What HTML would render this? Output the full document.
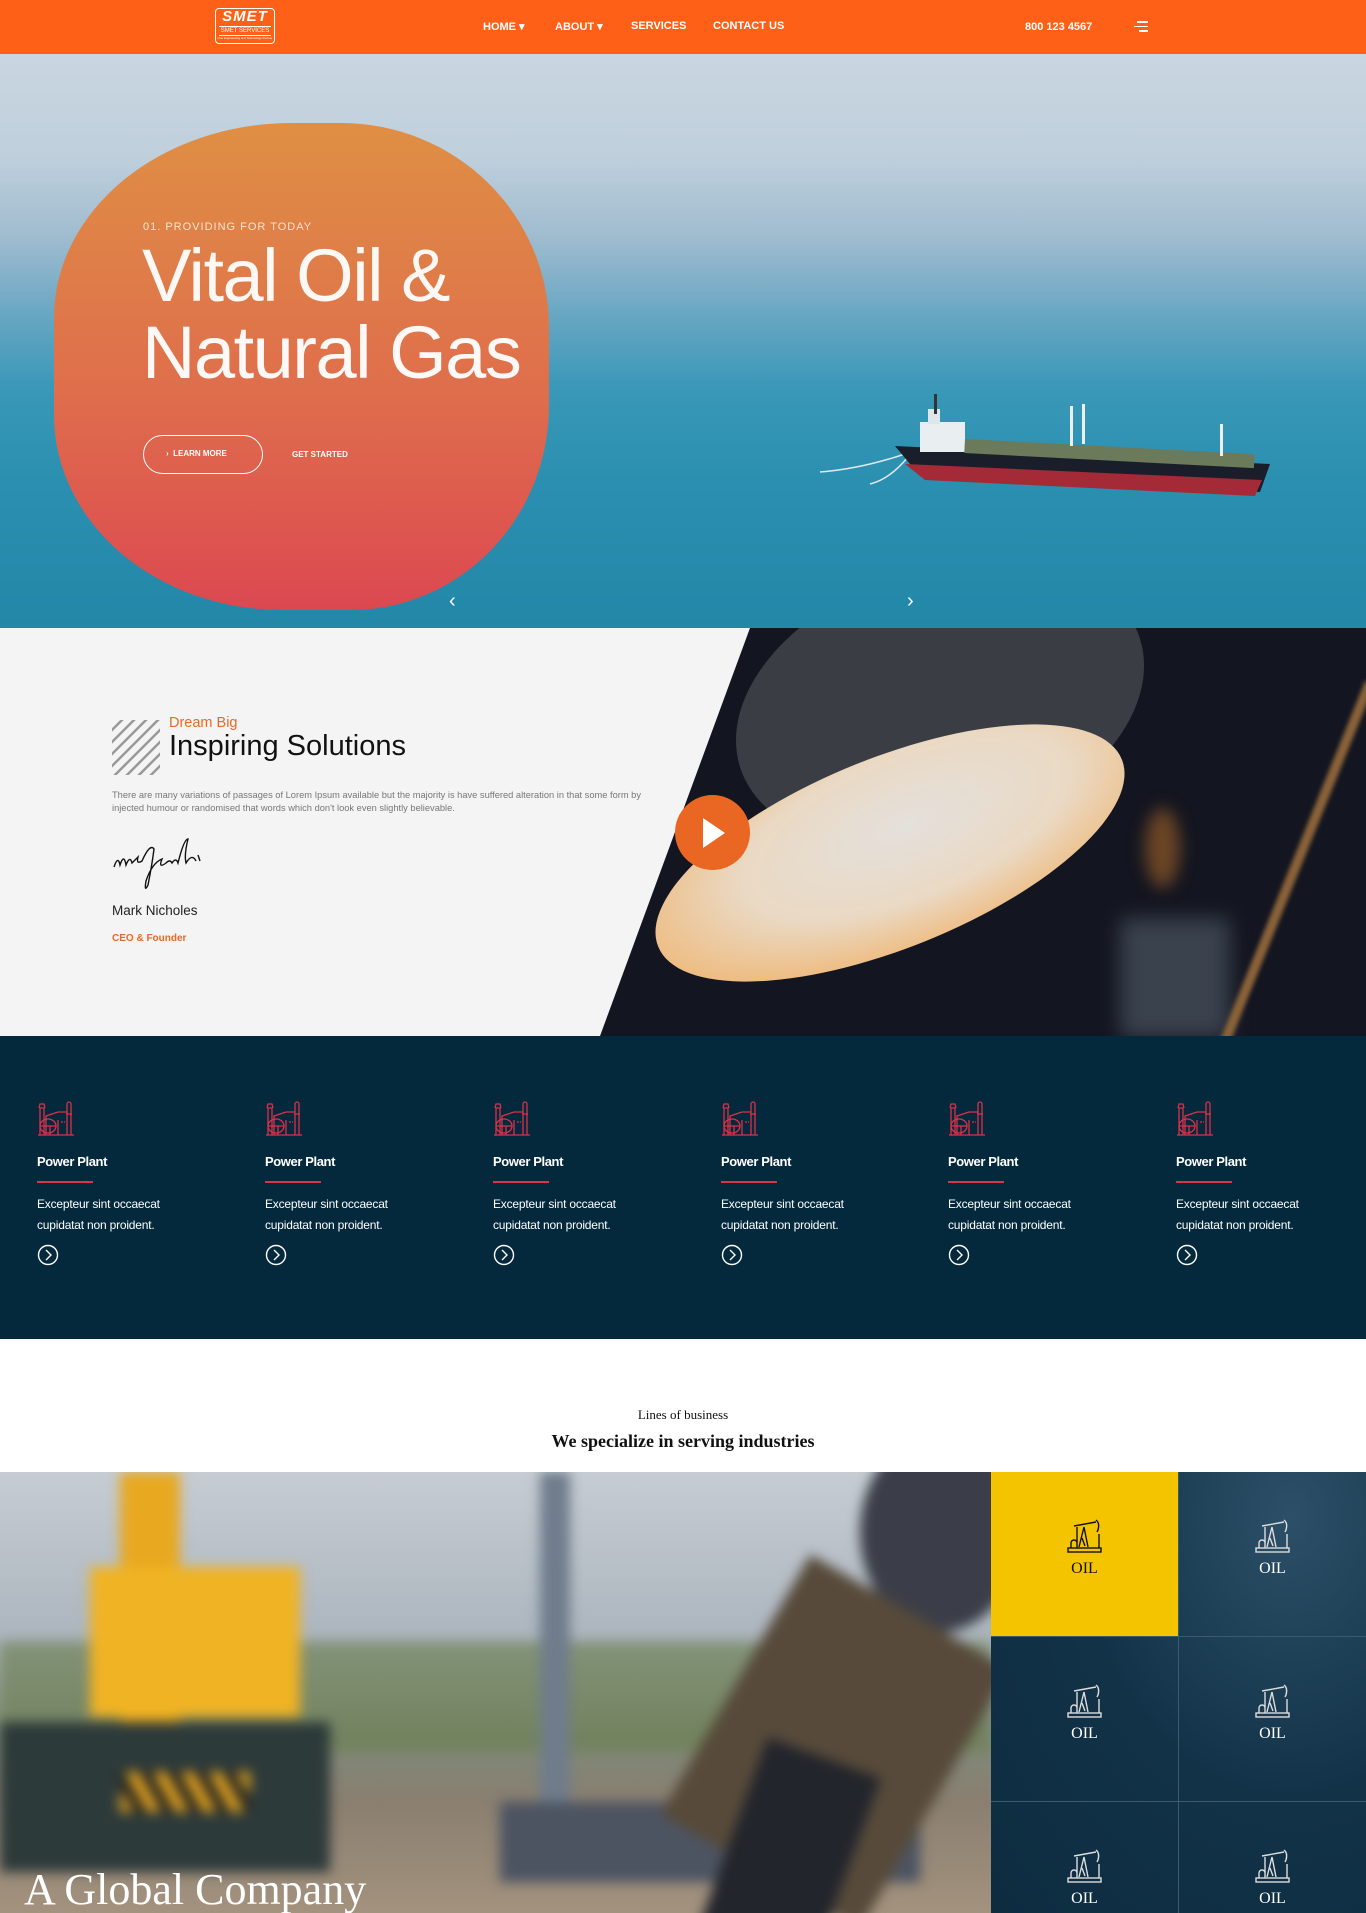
<!DOCTYPE html>
<html><head><meta charset="utf-8"><style>
*{margin:0;padding:0;box-sizing:border-box}
body{width:1366px;height:1913px;overflow:hidden;font-family:"Liberation Sans",sans-serif;background:#fff;position:relative}
.abs{position:absolute}
header{position:absolute;left:0;top:0;width:1366px;height:54px;background:#fe6017;z-index:5}
header .nav{position:absolute;top:20px;color:#fff;font-size:11px;font-weight:bold}
.hero{position:absolute;top:54px;left:0;width:1366px;height:574px;overflow:hidden;
background:linear-gradient(180deg,#c9d6e1 0%,#bfcfdc 18%,#9fbccf 32%,#6aa7c3 45%,#3a98b8 58%,#2a8fb0 75%,#2387a8 100%)}
.card{position:absolute;left:54px;top:69px;width:495px;height:487px;border-radius:48% 42% 40% 46% / 40% 42% 42% 40%;
background:linear-gradient(180deg,#df8f44 0%,#df6e4c 55%,#dc4851 100%)}
.sec2{position:absolute;top:628px;left:0;width:1366px;height:408px;background:#f4f4f4;overflow:hidden}
.dark{position:absolute;top:1036px;left:0;width:1366px;height:303px;background:#04293c}
.col{position:absolute;top:62px;color:#fff;width:165px}
.col h4{font-size:13px;font-weight:bold;margin-top:13px;letter-spacing:-.4px}
.col .ln{width:56px;height:1.5px;background:#d9324a;margin-top:12px}
.col p{font-size:12px;line-height:21px;margin-top:11px;letter-spacing:-.2px}
.cell{position:absolute;width:188px;height:165px;border-right:1px solid #3d5a6c;border-bottom:1px solid #3d5a6c;text-align:center;color:#fff;font-family:"Liberation Serif",serif;font-size:16px}
.cell svg{display:block;margin:46px auto 6px}
</style></head><body>
<header>
 <div class="abs" style="left:215px;top:8px;width:60px;height:36px;border:1.5px solid #fff;border-radius:4px;color:#fff;text-align:center">
  <div style="font-size:15px;font-weight:bold;font-style:italic;line-height:15px;letter-spacing:1px">SMET</div>
  <div style="font-size:6px;border-top:1px solid #fff;border-bottom:1px solid #fff;margin:2px 3px 0;line-height:8px">SMET SERVICES</div>
  <div style="font-size:3px;line-height:5px">One Engineering and Technology Partner</div>
 </div>
 <div class="nav" style="left:483px">HOME ▾</div>
 <div class="nav" style="left:555px">ABOUT ▾</div>
 <div class="nav" style="left:631px">SERVICES</div>
 <div class="nav" style="left:713px">CONTACT US</div>
 <div class="nav" style="left:1025px;top:21px">800 123 4567</div>
 <div class="abs" style="left:1134px;top:21px;width:14px"><div style="height:1.5px;background:#fff;margin-bottom:3px;margin-left:3px"></div><div style="height:1.5px;background:#fff;margin-bottom:3px"></div><div style="height:1.5px;background:#fff;margin-left:5px"></div></div>
</header>

<div class="hero">
 <svg class="abs" style="left:800px;top:300px" width="500" height="200" viewBox="0 0 500 200">
  <path d="M105 100 Q60 115 20 118" stroke="#dfe8ee" stroke-width="1.5" fill="none"/>
  <path d="M108 103 Q90 125 70 130" stroke="#dfe8ee" stroke-width="1.5" fill="none"/>
  <polygon points="95,92 470,110 460,138 120,122" fill="#1a1e2b"/>
  <polygon points="105,110 462,126 455,142 125,126" fill="#a32a36"/>
  <rect x="120" y="68" width="45" height="30" fill="#e9eef1"/>
  <rect x="128" y="55" width="12" height="15" fill="#dfe5ea"/>
  <rect x="134" y="40" width="3" height="20" fill="#333"/>
  <rect x="165" y="85" width="290" height="14" fill="#6a7a5a" transform="rotate(3 165 85)"/>
  <rect x="270" y="52" width="3" height="40" fill="#eee"/><rect x="282" y="50" width="3" height="40" fill="#eee"/><rect x="420" y="70" width="3" height="32" fill="#eee"/>
 </svg>
 <div class="card">
  <div class="abs" style="left:89px;top:98px;color:#fbe3d0;font-size:11px;letter-spacing:1px">01. PROVIDING FOR TODAY</div>
  <div class="abs" style="left:88px;top:114px;color:rgba(255,255,255,.95);font-size:74px;font-weight:300;line-height:77px;letter-spacing:-1.5px;white-space:nowrap">Vital Oil &amp;<br>Natural Gas</div>
  <div class="abs" style="left:89px;top:312px;width:120px;height:39px;border:1.5px solid #fff;border-radius:20px;color:#fff;font-size:8px;font-weight:bold;line-height:36px;padding-left:22px">›&nbsp; LEARN MORE</div>
  <div class="abs" style="left:238px;top:327px;color:#fff;font-size:8px;font-weight:bold">GET STARTED</div>
 </div>
 <div class="abs" style="left:449px;top:536px;color:#fff;font-size:20px">‹</div>
 <div class="abs" style="left:907px;top:536px;color:#fff;font-size:20px">›</div>
</div>

<div class="sec2">
 <div class="abs" style="left:600px;top:0;width:766px;height:408px;background:#131520;clip-path:polygon(150px 0,766px 0,766px 408px,0 408px)">
  <div class="abs" style="left:130px;top:-60px;width:420px;height:270px;border-radius:50%;background:#3b3d44;transform:rotate(-18deg)"></div>
  <div class="abs" style="left:40px;top:130px;width:500px;height:190px;border-radius:50%;background:radial-gradient(ellipse at 55% 40%,#e4e0db 0%,#ead9c4 45%,#f0b26a 85%,#b8732e 100%);transform:rotate(-22deg)"></div>
  <div class="abs" style="left:545px;top:180px;width:35px;height:80px;border-radius:50%;background:#6b4525;filter:blur(8px)"></div>
  <div class="abs" style="left:520px;top:290px;width:110px;height:120px;background:#4a5560;filter:blur(10px);opacity:.7"></div>
  <div class="abs" style="left:690px;top:40px;width:10px;height:400px;background:#8a6238;transform:rotate(22deg);filter:blur(2px)"></div>
 </div>
 <div class="abs" style="left:675px;top:167px;width:75px;height:75px;border-radius:50%;background:#ea6623"></div>
 <svg class="abs" style="left:703px;top:190px" width="26" height="30"><polygon points="0,0 22,15 0,30" fill="#fff"/></svg>
 <svg class="abs" style="left:112px;top:92px" width="48" height="55"><defs><clipPath id="c"><rect width="48" height="55"/></clipPath></defs><g clip-path="url(#c)" stroke="#999" stroke-width="2.5">
  <line x1="-10" y1="20" x2="20" y2="-10"/><line x1="-10" y1="32" x2="32" y2="-10"/><line x1="-10" y1="44" x2="44" y2="-10"/><line x1="-10" y1="56" x2="56" y2="-10"/><line x1="-10" y1="68" x2="68" y2="-10"/><line x1="2" y1="68" x2="80" y2="-10"/><line x1="14" y1="68" x2="92" y2="-10"/><line x1="26" y1="68" x2="104" y2="-10"/></g></svg>
 <div class="abs" style="left:169px;top:87px;color:#e8692a;font-size:14.5px">Dream Big</div>
 <div class="abs" style="left:169px;top:102px;color:#111;font-size:29px">Inspiring Solutions</div>
 <div class="abs" style="left:112px;top:161px;color:#777;font-size:9.3px;line-height:12.5px;width:540px">There are many variations of passages of Lorem Ipsum available but the majority is have suffered alteration in that some form by injected humour or randomised that words which don't look even slightly believable.</div>
 <svg class="abs" style="left:112px;top:207px" width="130" height="60" viewBox="0 0 130 60"><path d="M2 32 Q6 20 8 30 Q12 18 14 30 Q18 20 20 28 L26 22 Q24 30 30 26 Q38 8 42 14 Q40 30 36 50 Q32 58 34 46 Q40 28 50 24 Q46 34 54 28 Q58 24 60 28 Q64 22 66 28 Q72 4 76 4 Q72 20 74 28 Q80 18 84 26 M86 20 L88 26" stroke="#111" stroke-width="1.4" fill="none"/></svg>
 <div class="abs" style="left:112px;top:275px;color:#222;font-size:13.5px">Mark Nicholes</div>
 <div class="abs" style="left:112px;top:305px;color:#e8692a;font-size:10px;font-weight:bold">CEO &amp; Founder</div>
</div>

<div class="dark"></div>

<div class="abs" style="left:0;top:1407px;width:1366px;text-align:center;font-family:'Liberation Serif',serif;font-size:13px;color:#111">Lines of business</div>
<div class="abs" style="left:0;top:1431px;width:1366px;text-align:center;font-family:'Liberation Serif',serif;font-size:18px;font-weight:bold;color:#111">We specialize in serving industries</div>

<div class="abs" style="left:0;top:1472px;width:991px;height:441px;overflow:hidden;background:linear-gradient(180deg,#c6ccd2 0%,#aeb7c0 35%,#7f8a7a 60%,#8a7f70 75%,#a3927e 100%)">
 <div class="abs" style="left:0;top:0;width:991px;height:441px;filter:blur(6px)">
  <div class="abs" style="left:0;top:170px;width:991px;height:110px;background:#6a7f4f;opacity:.6"></div>
  <div class="abs" style="left:120px;top:0;width:60px;height:250px;background:#e8a820"></div>
  <div class="abs" style="left:90px;top:95px;width:210px;height:150px;background:#f0b323"></div>
  <div class="abs" style="left:0;top:250px;width:330px;height:150px;background:#2d3a3a"></div>
  <div class="abs" style="left:120px;top:300px;width:130px;height:40px;background:repeating-linear-gradient(60deg,#e8a820 0 12px,#222 12px 24px)"></div>
  <div class="abs" style="left:540px;top:0;width:30px;height:380px;background:#6f7c8c"></div>
  <div class="abs" style="left:500px;top:330px;width:420px;height:80px;background:#4c5462"></div>
  <div class="abs" style="left:860px;top:-40px;width:160px;height:200px;border-radius:50%;background:#3b3e48"></div>
  <div class="abs" style="left:720px;top:120px;width:230px;height:300px;background:#574a3a;transform:rotate(30deg)"></div>
  <div class="abs" style="left:730px;top:280px;width:120px;height:200px;background:#22252c;transform:rotate(20deg)"></div>
 </div>
 <div class="abs" style="left:24px;top:392px;color:#fff;font-family:'Liberation Serif',serif;font-size:44px;white-space:nowrap">A Global Company</div>
</div>

<div class="abs" style="left:991px;top:1472px;width:375px;height:441px;overflow:hidden;background:radial-gradient(ellipse at 80% 10%,#2c5068,#123248 50%,#0d2c40)">
 <div class="cell" style="left:0;top:0;background:#f5c400;color:#111">
  <svg width="36" height="36" viewBox="0 0 36 36" fill="none" stroke="#111" stroke-width="1.4"><rect x="1" y="30" width="33" height="4"/><path d="M4 30v-5a3 3 0 0 1 6 0v5M7 8l22-4M10 29V9M12 29l5-20 4 20M15 20l3 8M32 16v14"/><path d="M29 2q4 3 2 10l-1 2"/></svg>OIL</div>
 <div class="cell" style="left:188px;top:0"><svg width="36" height="36" viewBox="0 0 36 36" fill="none" stroke="#ddd" stroke-width="1.4"><rect x="1" y="30" width="33" height="4"/><path d="M4 30v-5a3 3 0 0 1 6 0v5M7 8l22-4M10 29V9M12 29l5-20 4 20M15 20l3 8M32 16v14"/><path d="M29 2q4 3 2 10l-1 2"/></svg>OIL</div>
 <div class="cell" style="left:0;top:165px"><svg width="36" height="36" viewBox="0 0 36 36" fill="none" stroke="#ddd" stroke-width="1.4"><rect x="1" y="30" width="33" height="4"/><path d="M4 30v-5a3 3 0 0 1 6 0v5M7 8l22-4M10 29V9M12 29l5-20 4 20M15 20l3 8M32 16v14"/><path d="M29 2q4 3 2 10l-1 2"/></svg>OIL</div>
 <div class="cell" style="left:188px;top:165px"><svg width="36" height="36" viewBox="0 0 36 36" fill="none" stroke="#ddd" stroke-width="1.4"><rect x="1" y="30" width="33" height="4"/><path d="M4 30v-5a3 3 0 0 1 6 0v5M7 8l22-4M10 29V9M12 29l5-20 4 20M15 20l3 8M32 16v14"/><path d="M29 2q4 3 2 10l-1 2"/></svg>OIL</div>
 <div class="cell" style="left:0;top:330px"><svg width="36" height="36" viewBox="0 0 36 36" fill="none" stroke="#ddd" stroke-width="1.4"><rect x="1" y="30" width="33" height="4"/><path d="M4 30v-5a3 3 0 0 1 6 0v5M7 8l22-4M10 29V9M12 29l5-20 4 20M15 20l3 8M32 16v14"/><path d="M29 2q4 3 2 10l-1 2"/></svg>OIL</div>
 <div class="cell" style="left:188px;top:330px"><svg width="36" height="36" viewBox="0 0 36 36" fill="none" stroke="#ddd" stroke-width="1.4"><rect x="1" y="30" width="33" height="4"/><path d="M4 30v-5a3 3 0 0 1 6 0v5M7 8l22-4M10 29V9M12 29l5-20 4 20M15 20l3 8M32 16v14"/><path d="M29 2q4 3 2 10l-1 2"/></svg>OIL</div>
</div>

<div class="abs" style="left:0;top:1036px;width:1366px;height:303px">
 <div class="col" style="left:37px">
  <svg width="38" height="38" viewBox="0 0 38 38" fill="none" stroke="#d9324a" stroke-width="1.3"><path d="M1 37h36M3 37V10h4v27M2 10l1-4h4l1 4M30 37V6a2 2 0 0 1 4 0v31M29 16h6M9 37V18l12-4h9M13 37V28M21 22V37"/><ellipse cx="11" cy="28" rx="8" ry="7"/><path d="M3 28h16M24 24h2M27 24h1"/></svg>
  <h4>Power Plant</h4><div class="ln"></div><p>Excepteur sint occaecat cupidatat non proident.</p>
  <svg style="margin-top:8px" width="22" height="22" viewBox="0 0 22 22" fill="none" stroke="#fff" stroke-width="1.4"><circle cx="11" cy="11" r="9.5"/><path d="M9 6l5 5-5 5"/></svg>
 </div>
 <div class="col" style="left:265px">
  <svg width="38" height="38" viewBox="0 0 38 38" fill="none" stroke="#d9324a" stroke-width="1.3"><path d="M1 37h36M3 37V10h4v27M2 10l1-4h4l1 4M30 37V6a2 2 0 0 1 4 0v31M29 16h6M9 37V18l12-4h9M13 37V28M21 22V37"/><ellipse cx="11" cy="28" rx="8" ry="7"/><path d="M3 28h16M24 24h2M27 24h1"/></svg>
  <h4>Power Plant</h4><div class="ln"></div><p>Excepteur sint occaecat cupidatat non proident.</p>
  <svg style="margin-top:8px" width="22" height="22" viewBox="0 0 22 22" fill="none" stroke="#fff" stroke-width="1.4"><circle cx="11" cy="11" r="9.5"/><path d="M9 6l5 5-5 5"/></svg>
 </div>
 <div class="col" style="left:493px">
  <svg width="38" height="38" viewBox="0 0 38 38" fill="none" stroke="#d9324a" stroke-width="1.3"><path d="M1 37h36M3 37V10h4v27M2 10l1-4h4l1 4M30 37V6a2 2 0 0 1 4 0v31M29 16h6M9 37V18l12-4h9M13 37V28M21 22V37"/><ellipse cx="11" cy="28" rx="8" ry="7"/><path d="M3 28h16M24 24h2M27 24h1"/></svg>
  <h4>Power Plant</h4><div class="ln"></div><p>Excepteur sint occaecat cupidatat non proident.</p>
  <svg style="margin-top:8px" width="22" height="22" viewBox="0 0 22 22" fill="none" stroke="#fff" stroke-width="1.4"><circle cx="11" cy="11" r="9.5"/><path d="M9 6l5 5-5 5"/></svg>
 </div>
 <div class="col" style="left:721px">
  <svg width="38" height="38" viewBox="0 0 38 38" fill="none" stroke="#d9324a" stroke-width="1.3"><path d="M1 37h36M3 37V10h4v27M2 10l1-4h4l1 4M30 37V6a2 2 0 0 1 4 0v31M29 16h6M9 37V18l12-4h9M13 37V28M21 22V37"/><ellipse cx="11" cy="28" rx="8" ry="7"/><path d="M3 28h16M24 24h2M27 24h1"/></svg>
  <h4>Power Plant</h4><div class="ln"></div><p>Excepteur sint occaecat cupidatat non proident.</p>
  <svg style="margin-top:8px" width="22" height="22" viewBox="0 0 22 22" fill="none" stroke="#fff" stroke-width="1.4"><circle cx="11" cy="11" r="9.5"/><path d="M9 6l5 5-5 5"/></svg>
 </div>
 <div class="col" style="left:948px">
  <svg width="38" height="38" viewBox="0 0 38 38" fill="none" stroke="#d9324a" stroke-width="1.3"><path d="M1 37h36M3 37V10h4v27M2 10l1-4h4l1 4M30 37V6a2 2 0 0 1 4 0v31M29 16h6M9 37V18l12-4h9M13 37V28M21 22V37"/><ellipse cx="11" cy="28" rx="8" ry="7"/><path d="M3 28h16M24 24h2M27 24h1"/></svg>
  <h4>Power Plant</h4><div class="ln"></div><p>Excepteur sint occaecat cupidatat non proident.</p>
  <svg style="margin-top:8px" width="22" height="22" viewBox="0 0 22 22" fill="none" stroke="#fff" stroke-width="1.4"><circle cx="11" cy="11" r="9.5"/><path d="M9 6l5 5-5 5"/></svg>
 </div>
 <div class="col" style="left:1176px">
  <svg width="38" height="38" viewBox="0 0 38 38" fill="none" stroke="#d9324a" stroke-width="1.3"><path d="M1 37h36M3 37V10h4v27M2 10l1-4h4l1 4M30 37V6a2 2 0 0 1 4 0v31M29 16h6M9 37V18l12-4h9M13 37V28M21 22V37"/><ellipse cx="11" cy="28" rx="8" ry="7"/><path d="M3 28h16M24 24h2M27 24h1"/></svg>
  <h4>Power Plant</h4><div class="ln"></div><p>Excepteur sint occaecat cupidatat non proident.</p>
  <svg style="margin-top:8px" width="22" height="22" viewBox="0 0 22 22" fill="none" stroke="#fff" stroke-width="1.4"><circle cx="11" cy="11" r="9.5"/><path d="M9 6l5 5-5 5"/></svg>
 </div>
</div>
</body></html>
